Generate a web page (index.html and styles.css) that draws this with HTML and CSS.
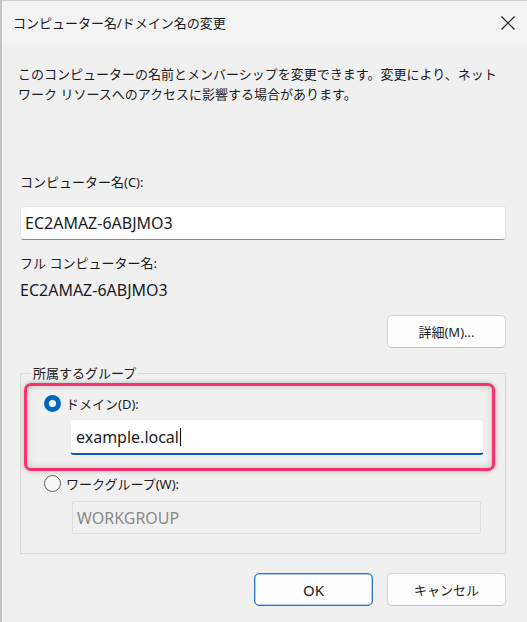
FILE: index.html
```html
<!DOCTYPE html>
<html lang="ja">
<head>
<meta charset="utf-8">
<title>コンピューター名/ドメイン名の変更</title>
<link rel="stylesheet" href="styles.css">
</head>
<body>
<div class="window">
  <div class="titlebar">
    <span class="title">コンピューター名/ドメイン名の変更</span>
    <svg class="close" width="16" height="16" viewBox="0 0 16 16"><path d="M1.5 1.5 L14.5 14.5 M14.5 1.5 L1.5 14.5" stroke="#1b1b1b" stroke-width="1.1" fill="none"/></svg>
  </div>
  <div class="content">
    <p class="desc">このコンピューターの名前とメンバーシップを変更できます。変更により、ネット<br>ワーク リソースへのアクセスに影響する場合があります。</p>
    <div class="label label-name">コンピューター名(C):</div>
    <div class="input input-name"><span class="latin">EC2AMAZ-6ABJMO3</span></div>
    <div class="label label-full">フル コンピューター名:</div>
    <div class="label value-full"><span class="latin">EC2AMAZ-6ABJMO3</span></div>
    <div class="btnrow first">
      <button class="btn">詳細(M)...</button>
    </div>
    <fieldset class="group">
      <legend class="legend">所属するグループ</legend>
      <div class="highlight">
        <div class="radio-row"><span class="radio checked"></span><span class="radio-label">ドメイン(D):</span></div>
        <div class="input input-domain"><span class="latin">example.local</span><span class="caret"></span></div>
      </div>
      <div class="radio-row wg"><span class="radio"></span><span class="radio-label">ワークグループ(W):</span></div>
      <div class="input input-wg"><span class="latin">WORKGROUP</span></div>
    </fieldset>
    <div class="btnrow bottom">
      <button class="btn default">OK</button>
      <button class="btn">キャンセル</button>
    </div>
  </div>
</div>
</body>
</html>
```
FILE: styles.css
```css
html, body {
  margin: 0;
  padding: 0;
  background: #f0f0f0;
}
body {
  width: 527px;
  height: 622px;
  overflow: hidden;
  font-family: "Noto Sans", "Noto Sans CJK JP", sans-serif;
  font-size: 13px;
  color: #1b1b1b;
}
.window {
  box-sizing: border-box;
  width: 527px;
  height: 622px;
  border-top: 1px solid #cfcfcf;
  border-left: 2px solid #c4c4c4;
  background: #f0f0f0;
}
.titlebar {
  height: 44px;
  display: flex;
  align-items: center;
  justify-content: space-between;
  padding-left: 11px;
  padding-right: 11px;
  background: #f3f3f3;
}
.title {
  font-size: 13px;
  line-height: 20px;
}
.close {
  display: block;
}
.content {
  padding-left: 18px;
  width: 486px;
}
.latin {
  font-size: 16px;
}
.desc {
  margin: 19px 0 0 -2px;
  line-height: 20px;
  white-space: nowrap;
}
.label {
  line-height: 20px;
}
.label-name { margin-top: 68px; }
.input {
  box-sizing: border-box;
  background: #fff;
  border: 1px solid #e4e4e4;
  border-bottom-color: #8d8d8d;
  border-radius: 4px;
  display: flex;
  align-items: center;
  padding-left: 4px;
}
.input-name {
  margin-top: 14px;
  height: 34px;
}
.label-full { margin-top: 13px; }
.value-full { margin-top: 7px; }
.btnrow {
  display: flex;
  justify-content: flex-end;
  gap: 14px;
}
.btnrow.first { margin-top: 14px; }
.btn {
  box-sizing: border-box;
  width: 119px;
  height: 33px;
  background: #fdfdfd;
  border: 1px solid #d3d3d3;
  border-bottom-color: #c2c2c2;
  border-radius: 5px;
  font-family: "Noto Sans", "Noto Sans CJK JP", sans-serif;
  font-size: 13px;
  color: #1b1b1b;
  padding: 0;
}
.btn.default {
  border: 1px solid #2f78c8;
  box-shadow: inset 0 0 0 0.5px #5a97d8;
  font-size: 15px;
}
.group {
  margin: 15px 0 0 0;
  padding: 0 0 19px 0;
  border: 1px solid #dadada;
  min-width: 0;
}
.legend {
  margin-left: 10px;
  padding: 0 2px;
  line-height: 20px;
}
.highlight {
  margin: 0 10px 0 3px;
  border: 3px solid #fa2f6d;
  border-radius: 7px;
  padding: 7px 8px 13px 17px;
  box-shadow: 0 0 5px rgba(0,0,0,0.25), inset 0 0 6px rgba(0,0,0,0.22);
}
.radio-row {
  display: flex;
  align-items: center;
  height: 20px;
}
.radio {
  box-sizing: border-box;
  width: 17px;
  height: 17px;
  border-radius: 50%;
  border: 1px solid #5b5b5b;
  background: #f6f6f6;
  margin-right: 5px;
}
.radio.checked {
  border: 5px solid #0067c0;
  background: #fff;
}
.input-domain {
  margin: 6px 0 0 26px;
  height: 36px;
  border-color: #ececec;
  border-bottom: 2px solid #005fb8;
  padding-left: 5px;
}
.caret {
  display: inline-block;
  width: 1px;
  height: 18px;
  background: #000;
  margin-left: 1px;
}
.radio-row.wg {
  margin: 2px 0 0 23px;
}
.input-wg {
  margin: 8px 0 0 51px;
  width: 409px;
  height: 33px;
  background: #f0f0f0;
  border: 1px solid #dedede;
  border-radius: 2px;
  color: #8a8a8a;
}
.btnrow.bottom { margin-top: 19px; }
```
